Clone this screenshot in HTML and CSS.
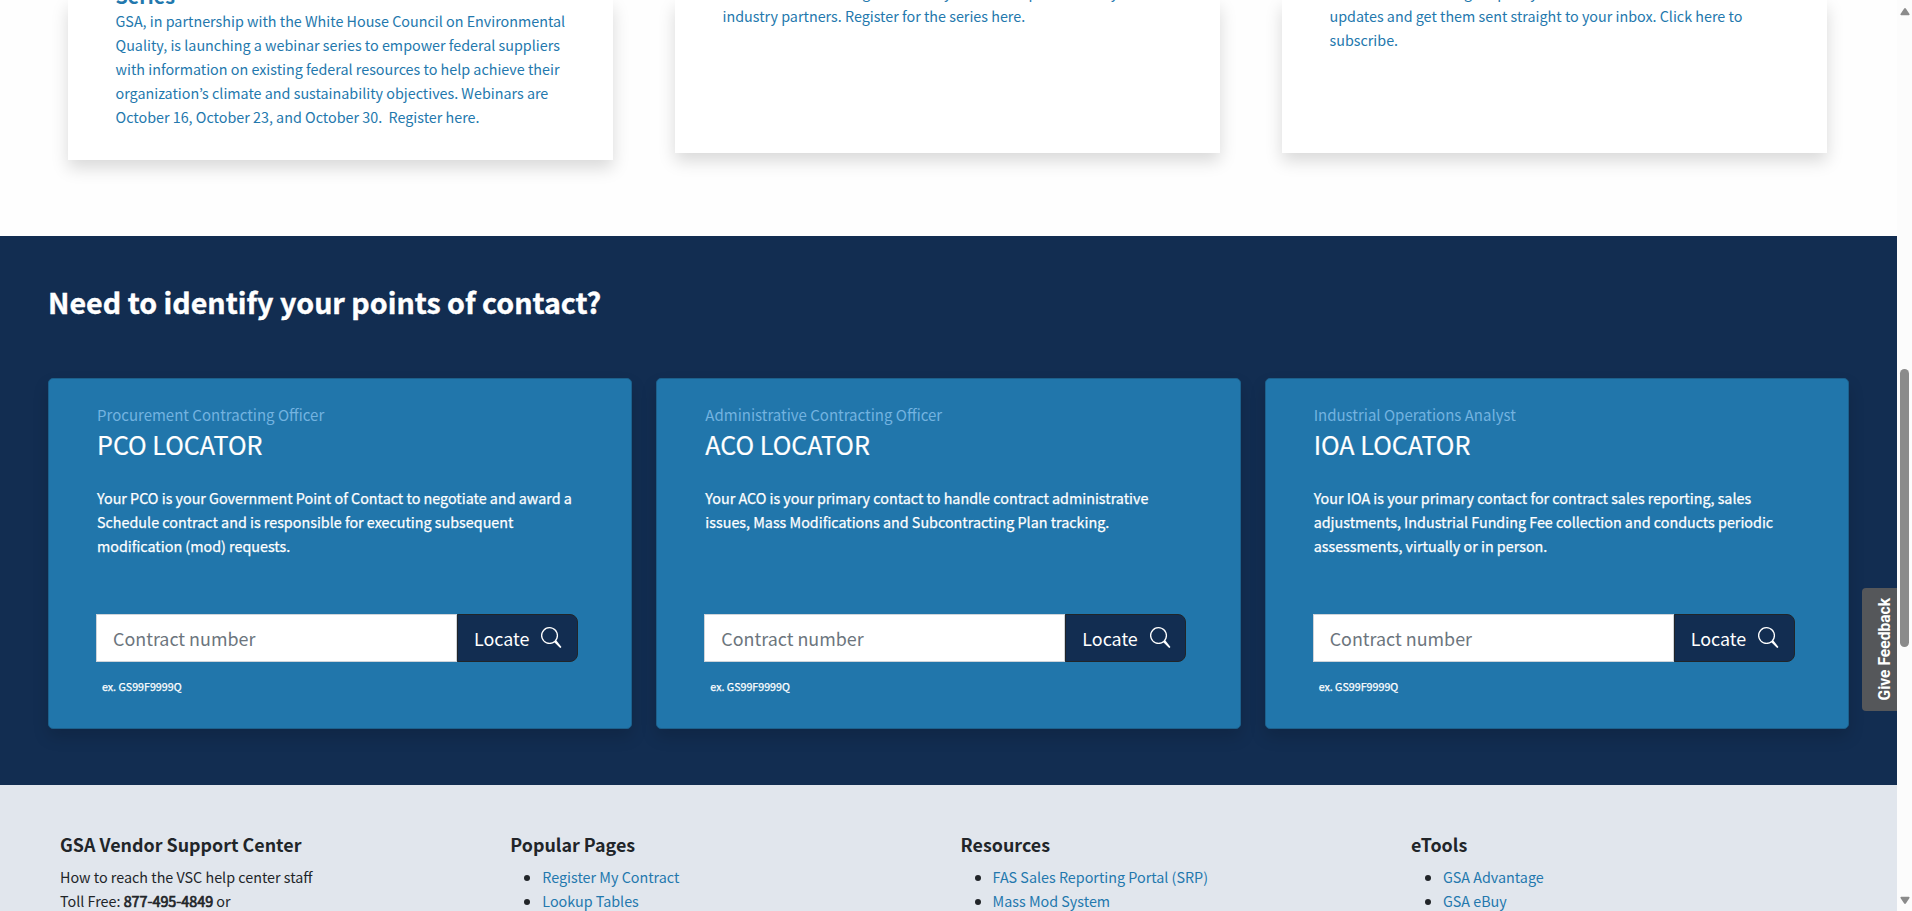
FILE: index.html
```html
<!DOCTYPE html>
<html lang="en">
<head>
<meta charset="utf-8">
<title>GSA Vendor Support Center</title>
<link rel="stylesheet" href="styles.css">
</head>
<body>
<div class="page">
  <main class="content">
    <section class="news">
      <article class="news-card news-card-tall">
        <h3>Series</h3>
        <p>GSA, in partnership with the White House Council on Environmental<br>Quality, is launching a webinar series to empower federal suppliers<br>with information on existing federal resources to help achieve their<br>organization’s climate and sustainability objectives. Webinars are<br>October 16, October 23, and October 30.&nbsp; Register here.</p>
      </article>
      <article class="news-card">
        <p>Join us for the coming talks in May with our experts and key<br>industry partners. Register for the series here.</p>
      </article>
      <article class="news-card">
        <p>Subscribe to our blog for policy news and<br>updates and get them sent straight to your inbox. Click here to<br>subscribe.</p>
      </article>
    </section>
    <section class="contacts">
      <h2>Need to identify your points of contact?</h2>
      <div class="locators">
        <article class="locator">
          <div class="role">Procurement Contracting Officer</div>
          <h3>PCO LOCATOR</h3>
          <p>Your PCO is your Government Point of Contact to negotiate and award a<br>Schedule contract and is responsible for executing subsequent<br>modification (mod) requests.</p>
          <form class="search"><span class="field">Contract number</span><span class="button">Locate <svg viewBox="0 0 16 16"><path d="M11.742 10.344a6.5 6.5 0 1 0-1.397 1.398l4.350 4.350.900-.900zM12 6.5a5.5 5.5 0 1 1-11 0 5.5 5.5 0 0 1 11 0z"/></svg></span></form>
          <div class="hint">ex. GS99F9999Q</div>
        </article>
        <article class="locator">
          <div class="role">Administrative Contracting Officer</div>
          <h3>ACO LOCATOR</h3>
          <p>Your ACO is your primary contact to handle contract administrative<br>issues, Mass Modifications and Subcontracting Plan tracking.</p>
          <form class="search"><span class="field">Contract number</span><span class="button">Locate <svg viewBox="0 0 16 16"><path d="M11.742 10.344a6.5 6.5 0 1 0-1.397 1.398l4.350 4.350.900-.900zM12 6.5a5.5 5.5 0 1 1-11 0 5.5 5.5 0 0 1 11 0z"/></svg></span></form>
          <div class="hint">ex. GS99F9999Q</div>
        </article>
        <article class="locator">
          <div class="role">Industrial Operations Analyst</div>
          <h3>IOA LOCATOR</h3>
          <p>Your IOA is your primary contact for contract sales reporting, sales<br>adjustments, Industrial Funding Fee collection and conducts periodic<br>assessments, virtually or in person.</p>
          <form class="search"><span class="field">Contract number</span><span class="button">Locate <svg viewBox="0 0 16 16"><path d="M11.742 10.344a6.5 6.5 0 1 0-1.397 1.398l4.350 4.350.900-.900zM12 6.5a5.5 5.5 0 1 1-11 0 5.5 5.5 0 0 1 11 0z"/></svg></span></form>
          <div class="hint">ex. GS99F9999Q</div>
        </article>
      </div>
    </section>
    <footer class="footer">
      <div class="col">
        <h4>GSA Vendor Support Center</h4>
        <div>How to reach the VSC help center staff</div>
        <div>Toll Free: <b>877-495-4849</b> or</div>
      </div>
      <div class="col">
        <h4>Popular Pages</h4>
        <ul><li><a>Register My Contract</a></li><li><a>Lookup Tables</a></li></ul>
      </div>
      <div class="col">
        <h4>Resources</h4>
        <ul><li><a>FAS Sales Reporting Portal (SRP)</a></li><li><a>Mass Mod System</a></li></ul>
      </div>
      <div class="col">
        <h4>eTools</h4>
        <ul><li><a>GSA Advantage</a></li><li><a>GSA eBuy</a></li></ul>
      </div>
    </footer>
    <div class="feedback"><span>Give Feedback</span></div>
  </main>
  <aside class="scrollbar">
    <svg class="arrow" viewBox="0 0 10 8"><path d="M4 .8a1.2 1.2 0 0 1 2 0L9.500 6a.8.8 0 0 1-.7 1.200H1.200A.8.8 0 0 1 .5 6z"/></svg>
    <div class="track"><div class="thumb"></div></div>
    <svg class="arrow down" viewBox="0 0 10 8"><path d="M4 .8a1.2 1.2 0 0 1 2 0L9.500 6a.8.8 0 0 1-.7 1.200H1.200A.8.8 0 0 1 .5 6z"/></svg>
  </aside>
</div>
</body>
</html>
```
FILE: styles.css
```css
* { box-sizing: border-box; }
body {
  margin: 0;
  font-family: "Noto Sans CJK KR", "Open Sans", sans-serif;
  font-size: 14.330px;
  line-height: 24px;
  color: #212529;
  overflow: hidden;
}
h2, h3, h4, p, ul { margin: 0; padding: 0; }
.page { display: flex; width: 1912px; height: 911px; overflow: hidden; }
.content { position: relative; width: 1897px; flex: none; }

.news {
  display: flex;
  gap: 62px;
  height: 236px;
  padding-left: 68px;
  overflow: hidden;
  background: #fefefe;
}
.news-card {
  display: flex;
  flex-direction: column;
  justify-content: flex-end;
  width: 545px;
  height: 153px;
  padding: 0 47.500px 125px;
  background: #fff;
  box-shadow: 0 8px 16px rgba(0, 0, 0, .15);
  color: #2378ad;
  white-space: nowrap;
}
.news-card:last-child { padding-bottom: 101px; }
.news-card-tall { height: 160px; padding-bottom: 31px; }
.news-card h3 { margin-bottom: 1px; font-size: 19.700px; line-height: 24px; }

.contacts { height: 549px; padding: 47px 48px 0; background: #122d51; color: #fff; }
.contacts h2 { font-size: 28.640px; line-height: 38px; white-space: nowrap; -webkit-text-stroke: .4px; }
.locators { display: grid; grid-template-columns: repeat(3, 1fr); gap: 24px; margin-top: 57px; }
.locator {
  height: 351px;
  padding: 23px 48px 0;
  border: 1px solid #1c608c;
  border-radius: 5px;
  background: #2176ab;
  box-shadow: 0 8px 16px rgba(0, 0, 0, .15);
  white-space: nowrap;
}
.role { font-size: 15px; line-height: 26px; color: #73b3e0; }
.locator h3 { font-size: 25.100px; font-weight: 400; line-height: 32px; -webkit-text-stroke: .2px; }
.locator p { height: 128px; margin-top: 26px; -webkit-text-stroke: .25px; }
.search { display: flex; width: 482px; height: 48px; margin-left: -1px; font-size: 17.900px; }
.field {
  width: 361px;
  padding: 0 16px;
  border: 1px solid #ced4da;
  background: #fff;
  color: #6c757d;
  line-height: 46px;
}
.button {
  display: flex;
  align-items: center;
  gap: 12px;
  width: 121px;
  padding-left: 16px;
  border: 1px solid #212529;
  border-radius: 0 8px 8px 0;
  background: #122d51;
}
.button svg { width: 21px; height: 21px; margin-bottom: 2px; fill: #fff; }
.hint { margin: 13px 0 0 5px; font-size: 10.700px; -webkit-text-stroke: .25px; }

.footer { display: flex; height: 126px; padding: 47px 0 0 60px; background: #e1e6ed; white-space: nowrap; overflow: hidden; }
.col { flex: none; width: 450.300px; }
.col b { font-weight: 400; -webkit-text-stroke: .7px; }
.footer h4 { font-size: 17.870px; line-height: 24px; margin-bottom: 9px; }
.footer ul { padding-left: 32px; }
.footer a { color: #2378ad; }

.feedback {
  position: absolute;
  left: 1862px;
  top: 588px;
  display: flex;
  align-items: center;
  justify-content: center;
  width: 35px;
  height: 123px;
  padding-left: 10px;
  border-radius: 4px 0 0 4px;
  background: #55575a;
  color: #fff;
  font: 700 15.600px/18px Roboto, sans-serif;
}
.feedback span { writing-mode: vertical-rl; transform: rotate(180deg); white-space: nowrap; }

.scrollbar { display: flex; flex-direction: column; align-items: center; width: 15px; padding: 8px 0 7px; background: #fcfcfc; }
.arrow { display: block; width: 10px; height: 8px; fill: #8b8b8b; }
.track { flex: 1; padding-top: 353px; }
.thumb { width: 9px; height: 278px; border-radius: 5px; background: #8b8b8b; }
.down { transform: rotate(180deg); }
```
